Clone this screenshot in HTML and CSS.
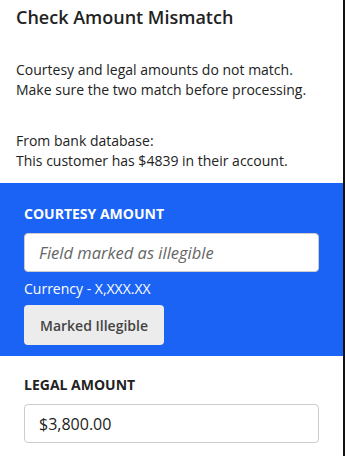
FILE: index.html
```html
<!DOCTYPE html>
<html lang="en">
<head>
    <meta charset="UTF-8">
    <meta name="viewport" content="width=device-width, initial-scale=1.0">
    <title>Check Amount Mismatch</title>
    <link rel="stylesheet" href="styles.css">
</head>
<body>
    <div class="panel">
        <h1>Check Amount Mismatch</h1>

        <div class="info">
            <p>Courtesy and legal amounts do not match.<br>Make sure the two match before processing.</p>
            <p>From bank database:<br>This customer has $4839 in their account.</p>
        </div>

        <!-- Courtesy amount (highlighted) -->
        <div class="field-block active">
            <label class="field-label">Courtesy Amount</label>
            <input type="text" class="field-input" placeholder="Field marked as illegible">
            <div class="hint">Currency - X,XXX.XX</div>
            <button class="btn-grey">Marked Illegible</button>
        </div>

        <div class="field-block">
            <label class="field-label">Legal Amount</label>
            <input type="text" class="field-input" value="$3,800.00">
        </div>
    </div>
</body>
</html>
```

FILE: styles.css
```css
* {
    margin: 0;
    padding: 0;
    box-sizing: border-box;
    font-family: 'Open Sans', sans-serif;
}

:root {
    --blue: #1a63f5;
    --text: #222;
}

body {
    background: white;
}

.panel {
    width: 345px;
    min-height: 456px;
    border-right: 2px solid #111;
    color: var(--text);
}

h1 {
    font-size: 18px;
    font-weight: 600;
    padding: 5px 16px 0;
    line-height: 24px;
}

.info {
    padding: 31px 16px 0;
    font-size: 14px;
    line-height: 20px;
}

.info p {
    margin-bottom: 31px;
}

.info p:last-child {
    margin-bottom: 12px;
}

.field-block {
    padding: 20px 24px 11px;
    display: flex;
    flex-direction: column;
    align-items: flex-start;
}

.field-block.active {
    padding-top: 22px;
    background-color: var(--blue);
    color: white;
}

.field-label {
    font-size: 14px;
    font-weight: 700;
    text-transform: uppercase;
    line-height: 18px;
    margin-bottom: 10px;
}

.field-input {
    width: 100%;
    height: 39px;
    padding: 0 14px;
    font-size: 16px;
    color: #222;
    border: 1px solid #ccc;
    border-radius: 4px;
    background: white;
}

.field-input::placeholder {
    font-style: italic;
    font-size: 16.5px;
    color: #666;
}

.hint {
    font-size: 14px;
    line-height: 18px;
    margin-top: 8px;
}

.btn-grey {
    margin-top: 7px;
    padding: 0 16px;
    height: 40px;
    background-color: #ececec;
    color: #444;
    border: none;
    border-radius: 4px;
    font-size: 14px;
    font-weight: 600;
}
```
